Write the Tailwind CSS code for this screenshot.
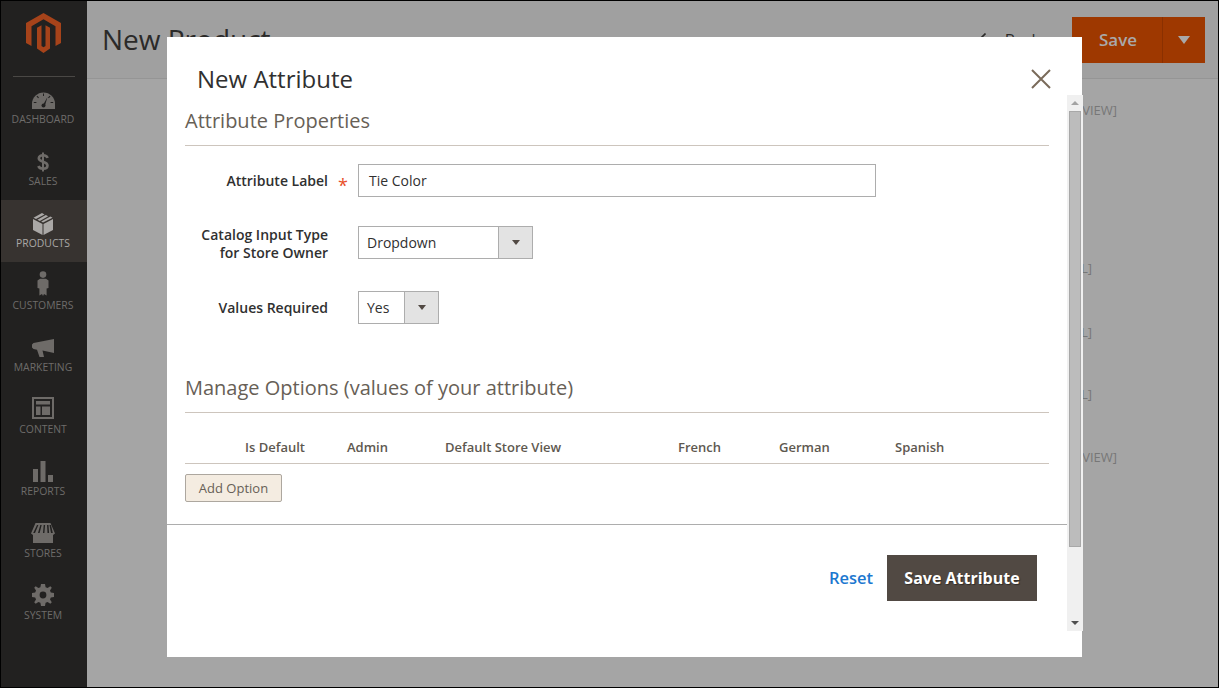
<!doctype html>
<html>
<head>
<meta charset="utf-8">
<title>New Attribute</title>
<script src="https://cdn.jsdelivr.net/npm/@tailwindcss/browser@4"></script>
</head>
<body class="m-0 bg-black">
<div class="relative flex w-[1219px] h-[688px] box-border border border-black overflow-hidden font-['Open_Sans',sans-serif] bg-[#a5a5a5]">

  <!-- sidebar -->
  <aside class="w-[86px] shrink-0 bg-[#222120] flex flex-col text-[#6e6c6a] fill-[#6e6b68]">
    <div class="h-[76px] -mb-px pr-[1px] flex justify-center pt-[12px] border-b border-[#4a4845] mx-[12px]">
      <svg width="35" height="40" viewBox="0 0 35 40" class="fill-[#a6431a]">
        <path d="M17.5 0L35 10.1V30L29.5 33V13.2L17.5 6.2L5.5 13.2V33L0 30V10.1Z"/>
        <path d="M11 14.8L15.5 12.2V33L17.5 34.2L19.5 33V12.2L24 14.8V35.6L17.5 40L11 35.6Z"/>
      </svg>
    </div>

    <a class="h-[62px] pr-[2px] flex flex-col items-center">
      <span class="h-[33px] flex items-end">
        <svg width="23" height="17" viewBox="0 0 23 17"><path d="M0 17V12A11.5 11.5 0 0 1 23 12V17Z"/><path d="M11 13L15.5 5L13 13.5Z" fill="#222120"/><circle cx="11.5" cy="13.5" r="2" fill="#222120"/><path d="M11 1.5h1v2.5h-1zM4.5 4.5l.8-.7 1.7 1.8-.8.7zM18.5 4.5l-.8-.7-1.7 1.8.8.7zM1.8 10h2.6v1H1.8zM18.6 10h2.6v1h-2.6z" fill="#222120"/></svg>
      </span>
      <span class="mt-[3px] text-[10.4px] leading-[14px] uppercase">Dashboard</span>
    </a>
    <a class="h-[62px] pr-[2px] flex flex-col items-center">
      <span class="h-[34px] flex items-end">
        <svg width="12" height="20" viewBox="0 0 12 20" fill="none" stroke="#6e6b68"><path stroke-width="2.6" d="M10.5 6C10 4 8 3.3 6 3.3C3.5 3.3 1.8 4.5 1.8 6.3C1.8 10.5 10.5 9 10.5 13.5C10.5 15.5 8.5 16.7 6 16.7C3.8 16.7 2 15.8 1.4 14"/><path stroke-width="2" d="M6 0.5V19.5"/></svg>
      </span>
      <span class="mt-[2px] text-[10.4px] leading-[14px] uppercase">Sales</span>
    </a>
    <a class="h-[62px] pr-[2px] flex flex-col items-center bg-[#373330] text-[#aaa8a6]">
      <span class="h-[35px] flex items-end">
        <svg width="20" height="22" viewBox="0 0 20 22" class="fill-[#aaa8a6]"><path d="M0 6L9.5 11V22L0 17Z"/><path d="M10.5 11L20 6V17L10.5 22Z"/><path d="M9 0L0.5 4.7L3 6L11.5 1.4Z"/><path d="M12.8 2L4.4 6.7L6.8 8L15.2 3.3Z"/><path d="M16.5 4L8.2 8.6L10 9.6L19.5 4.7L17.5 3.5Z"/></svg>
      </span>
      <span class="mt-[1px] text-[10.4px] leading-[14px] uppercase">Products</span>
    </a>
    <a class="h-[62px] pr-[2px] flex flex-col items-center">
      <span class="h-[34px] flex items-end">
        <svg width="12" height="25" viewBox="0 0 12 25"><circle cx="6" cy="3.6" r="3.3"/><path d="M3 7.8H9L11.5 9.6V17L9.6 17.5V24.5L7 23L6 25L5 23L2.4 24.5V17.5L0.5 17V9.6Z"/></svg>
      </span>
      <span class="mt-[2px] text-[10.4px] leading-[14px] uppercase">Customers</span>
    </a>
    <a class="h-[62px] pr-[2px] flex flex-col items-center">
      <span class="h-[33px] flex items-end">
        <svg width="22" height="18" viewBox="0 0 22 18"><path d="M22 0V14L10.5 11.5L12 18H7.5L5 10.8L1.5 10L0 8.5V5.5L1.5 4Z"/></svg>
      </span>
      <span class="mt-[3px] text-[10.4px] leading-[14px] uppercase">Marketing</span>
    </a>
    <a class="h-[62px] pr-[2px] flex flex-col items-center">
      <span class="h-[33px] flex items-end">
        <svg width="22" height="22" viewBox="0 0 22 22"><path fill-rule="evenodd" d="M0 0H22V22H0ZM2 2V20H20V2Z"/><path d="M4 4H18V7.5H4ZM4 9.5H8.5V18H4ZM10 9.5H18V18H10Z"/></svg>
      </span>
      <span class="mt-[3px] text-[10.4px] leading-[14px] uppercase">Content</span>
    </a>
    <a class="h-[62px] pr-[2px] flex flex-col items-center">
      <span class="h-[34px] flex items-end">
        <svg width="20" height="21" viewBox="0 0 20 21"><path d="M0 8H5V21H0ZM7.5 0H12.5V21H7.5ZM15 14H20V21H15Z"/></svg>
      </span>
      <span class="mt-[2px] text-[10.4px] leading-[14px] uppercase">Reports</span>
    </a>
    <a class="h-[62px] pr-[2px] flex flex-col items-center">
      <span class="h-[33px] flex items-end">
        <svg width="24" height="20" viewBox="0 0 24 20"><path fill-rule="evenodd" d="M4.5 0H19.5L24 10.5L22 12V20H2V12L0 10.5ZM6 2L2.2 10H4L7.4 2ZM9.3 2L7 10H8.6L10.7 2ZM12.7 2L12 10H13.4L14.1 2H12.7ZM16 2L16.5 10H18.1L17.5 2ZM18.5 2L20 10H21.8L20 2Z" /></svg>
      </span>
      <span class="mt-[3px] text-[10.4px] leading-[14px] uppercase">Stores</span>
    </a>
    <a class="h-[62px] pr-[2px] flex flex-col items-center">
      <span class="h-[34px] flex items-end">
        <svg width="22" height="22" viewBox="0 0 22 22"><path fill-rule="evenodd" d="M9 0H13L13.6 3.2L15.6 4L18.3 2.2L19.8 3.7L18 6.4L18.8 8.4L22 9V13L18.8 13.6L18 15.6L19.8 18.3L18.3 19.8L15.6 18L13.6 18.8L13 22H9L8.4 18.8L6.4 18L3.7 19.8L2.2 18.3L4 15.6L3.2 13.6L0 13V9L3.2 8.4L4 6.4L2.2 3.7L3.7 2.2L6.4 4L8.4 3.2ZM11 7.6A3.4 3.4 0 1 0 11 14.4A3.4 3.4 0 1 0 11 7.6Z"/></svg>
      </span>
      <span class="mt-[2px] text-[10.4px] leading-[14px] uppercase">System</span>
    </a>
  </aside>

  <!-- page behind the modal -->
  <main class="flex-1 flex flex-col">
    <header class="h-[78px] shrink-0 bg-[#a0a0a0] border-b border-[#959595] flex items-start">
      <h1 class="ml-[15px] mt-[18px] text-[28px] leading-[40px] text-[#2b2a29]">New Product</h1>
      <span class="ml-auto mt-[28px] flex items-center gap-[19px] text-[16px] leading-[22px] text-[#2b2a29]">
        <svg width="8" height="14" viewBox="0 0 8 14" fill="none" stroke="#2b2a29" stroke-width="1.6"><path d="M7.5 0.5L1 7L7.5 13.5"/></svg>
        Back
      </span>
      <div class="ml-[32px] mr-[13px] mt-[16px] w-[133px] h-[46px] flex bg-[#9e3800] text-[#a9a9a9]">
        <span class="w-[91px] pl-[2px] border-r border-[#8a3000] flex items-center justify-center text-[17px] font-semibold">Save</span>
        <span class="flex-1 flex items-center justify-center">
          <span class="w-0 h-0 border-x-[6px] border-x-transparent border-t-[8px] border-t-[#a9a9a9]"></span>
        </span>
      </div>
    </header>
    <div class="flex flex-col items-end text-[13px] leading-[18px] text-[#777]">
      <span class="mt-[22px] mr-[101px]">[STORE VIEW]</span>
      <span class="mt-[140px] mr-[126px]">[GLOBAL]</span>
      <span class="mt-[46px] mr-[126px]">[GLOBAL]</span>
      <span class="mt-[44px] mr-[126px]">[GLOBAL]</span>
      <span class="mt-[45px] mr-[101px]">[STORE VIEW]</span>
    </div>
  </main>

  <!-- modal -->
  <section class="absolute left-[166px] top-[36px] w-[915px] h-[620px] bg-white">
    <h2 class="pl-[30px] pt-[26px] text-[24px] leading-[32px] text-[#303030]">New Attribute</h2>
    <svg width="20" height="20" viewBox="0 0 20 20" class="absolute left-[864px] top-[32px] stroke-[#7a6a5a]" fill="none" stroke-width="2"><path d="M1 1L19 19M19 1L1 19"/></svg>

    <div class="pl-[18px] pr-[33px]">
      <h3 class="mt-[12px] h-[39px] border-b border-[#cdc5bd] text-[20px] leading-[28px] text-[#676056]">Attribute Properties</h3>

      <div class="mt-[18px] flex items-center">
        <label class="w-[143px] text-right text-[14px] font-semibold text-[#303030]">Attribute Label</label>
        <span class="w-[30px] pl-[10px] h-[14px] pt-[1px] text-[18px] leading-[20px] text-[#e8502a]">*</span>
        <div class="w-[518px] h-[33px] border border-[#adadad] pl-[10px] flex items-center text-[14px] text-[#303030]">Tie Color</div>
      </div>

      <div class="mt-[29px] flex items-start">
        <label class="w-[143px] text-right text-[14px] leading-[18px] font-semibold text-[#303030]">Catalog Input Type<br>for Store Owner</label>
        <span class="w-[30px]"></span>
        <div class="w-[175px] h-[33px] border border-[#adadad] flex text-[14px] text-[#303030]">
          <span class="flex-1 pl-[8px] flex items-center">Dropdown</span>
          <span class="w-[34px] bg-[#e3e3e3] border-l border-[#adadad] flex items-center justify-center">
            <span class="w-0 h-0 border-x-[4px] border-x-transparent border-t-[5px] border-t-[#514943]"></span>
          </span>
        </div>
      </div>

      <div class="mt-[29px] flex items-center">
        <label class="w-[143px] text-right text-[14px] font-semibold text-[#303030]">Values Required</label>
        <span class="w-[30px]"></span>
        <div class="w-[81px] h-[33px] border border-[#adadad] flex text-[14px] text-[#303030]">
          <span class="flex-1 pl-[8px] flex items-center">Yes</span>
          <span class="w-[34px] bg-[#e3e3e3] border-l border-[#adadad] flex items-center justify-center">
            <span class="w-0 h-0 border-x-[4px] border-x-transparent border-t-[5px] border-t-[#514943]"></span>
          </span>
        </div>
      </div>

      <h3 class="mt-[50px] h-[39px] border-b border-[#cdc5bd] text-[20px] leading-[28px] text-[#676056]">Manage Options (values of your attribute)</h3>

      <div class="h-[51px] pt-[24px] border-b border-[#cdc5bd] grid grid-cols-[60px_102px_98px_233px_101px_116px_1fr] text-[13px] leading-[20px] font-semibold text-[#5e5850]">
        <span></span><span>Is Default</span><span>Admin</span><span>Default Store View</span><span>French</span><span>German</span><span>Spanish</span>
      </div>

      <button class="mt-[10px] block w-[97px] h-[28px] pt-[2px] bg-[#f4ece1] border border-[#ada79f] rounded-[2px] text-[13px] text-[#676056]">Add Option</button>
    </div>

    <div class="mt-[22px] w-[900px] border-t border-[#adadad]"></div>

    <div class="mt-[30px] pr-[45px] flex justify-end items-center gap-[14px]">
      <a class="text-[16.5px] font-semibold text-[#1c78d0]">Reset</a>
      <button class="w-[150px] h-[46px] bg-[#514943] text-white text-[16px] font-bold [text-shadow:1px_1px_1px_rgba(0,0,0,0.4)]">Save Attribute</button>
    </div>

    <!-- scrollbar -->
    <div class="absolute left-[900px] top-[58px] w-[16px] h-[536px] bg-[#f0f0f0]">
      <span class="absolute left-[4px] top-[6px] w-0 h-0 border-x-[4px] border-x-transparent border-b-[4px] border-b-[#a3a3a3]"></span>
      <div class="absolute left-[2px] top-[16px] w-[12px] h-[436px] bg-[#bcbcbc] border border-[#a8a8a8]"></div>
      <span class="absolute left-[4px] bottom-[6px] w-0 h-0 border-x-[4px] border-x-transparent border-t-[4px] border-t-[#505050]"></span>
    </div>
  </section>
</div>
</body>
</html>
